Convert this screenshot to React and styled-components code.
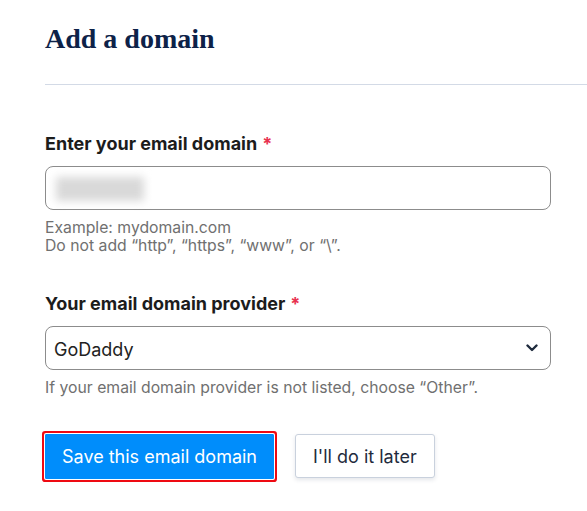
import React from "react";
import styled, { createGlobalStyle } from "styled-components";

const Global = createGlobalStyle`
  html, body { margin: 0; padding: 0; background: #ffffff; }
  body { font-family: Inter, "Noto Sans", sans-serif; }
  * { box-sizing: border-box; }
`;

const Page = styled.div`
  padding: 22px 0 0 45px;
  width: 587px;
  height: 511px;
  overflow: hidden;
`;

const Heading = styled.h1`
  margin: 0;
  font-family: "Liberation Serif", "DejaVu Serif", serif;
  font-weight: 700;
  font-size: 28px;
  line-height: 34px;
  color: #0d2248;
`;

const Divider = styled.hr`
  margin: 28px 0 0 0;
  border: 0;
  height: 1px;
  background: #d3dae6;
`;

const Form = styled.div`
  width: 506px;
  display: flex;
  flex-direction: column;
`;

const Field = styled.div`
  display: flex;
  flex-direction: column;
  margin-top: ${(p) => p.$top}px;
`;

const Label = styled.label`
  font-size: 18px;
  line-height: 22px;
  font-weight: 700;
  color: #1c1c1c;
  margin-bottom: 11px;
`;

const Required = styled.span`
  color: #e8314f;
  margin-left: 5px;
`;

const InputBox = styled.div`
  position: relative;
  height: 44px;
  border: 1px solid #8c8c8c;
  border-radius: 8px;
  display: flex;
  align-items: center;
  padding: 2px 12px 0 8px;
  font-size: 18px;
  color: #222222;
  background: #fff;
`;

const Blurred = styled.span`
  display: block;
  width: 88px;
  height: 24px;
  margin-left: 2px;
  background: #d9d9d9;
  filter: blur(4px);
`;

const Chevron = styled.svg`
  position: absolute;
  right: 12px;
  top: 50%;
  transform: translateY(-50%);
`;

const Help = styled.div`
  margin-top: 9px;
  font-size: 15.75px;
  line-height: 17.5px;
  color: #707070;
`;

const Actions = styled.div`
  margin-top: 37px;
  display: flex;
  align-items: center;
  gap: 21px;
`;

const Button = styled.button`
  font-family: Inter, "Noto Sans", sans-serif;
  font-size: 18px;
  height: ${(p) => (p.$primary ? 45 : 44)}px;
  padding: 0 ${(p) => (p.$primary ? 16 : 17)}px;
  border-radius: ${(p) => (p.$primary ? 1 : 3)}px;
  cursor: pointer;
  background: ${(p) => (p.$primary ? "#008dfb" : "#ffffff")};
  color: ${(p) => (p.$primary ? "#ffffff" : "#1f2b3d")};
  border: 1px solid ${(p) => (p.$primary ? "#008dfb" : "#c9d1dd")};
  box-shadow: ${(p) =>
    p.$primary
      ? "0 0 0 1px #ffffff, 0 0 0 3px #ee0a12"
      : "0 2px 4px rgba(30, 50, 80, 0.12)"};
`;

export default function App() {
  return (
    <>
      <Global />
      <Page>
        <Heading>Add a domain</Heading>
        <Divider />
        <Form>
          <Field $top={48}>
            <Label>
              Enter your email domain<Required>*</Required>
            </Label>
            <InputBox>
              <Blurred />
            </InputBox>
            <Help>
              Example: mydomain.com
              <br />
              Do not add “http”, “https”, “www”, or “\”.
            </Help>
          </Field>
          <Field $top={39}>
            <Label>
              Your email domain provider<Required>*</Required>
            </Label>
            <InputBox>
              GoDaddy
              <Chevron width="12" height="8" viewBox="0 0 12 8">
                <polyline
                  points="1.5,1.5 6,6 10.5,1.5"
                  fill="none"
                  stroke="#1f2b3d"
                  strokeWidth="2.4"
                  strokeLinecap="round"
                  strokeLinejoin="round"
                />
              </Chevron>
            </InputBox>
            <Help>If your email domain provider is not listed, choose “Other”.</Help>
          </Field>
          <Actions>
            <Button $primary>Save this email domain</Button>
            <Button>I'll do it later</Button>
          </Actions>
        </Form>
      </Page>
    </>
  );
}
